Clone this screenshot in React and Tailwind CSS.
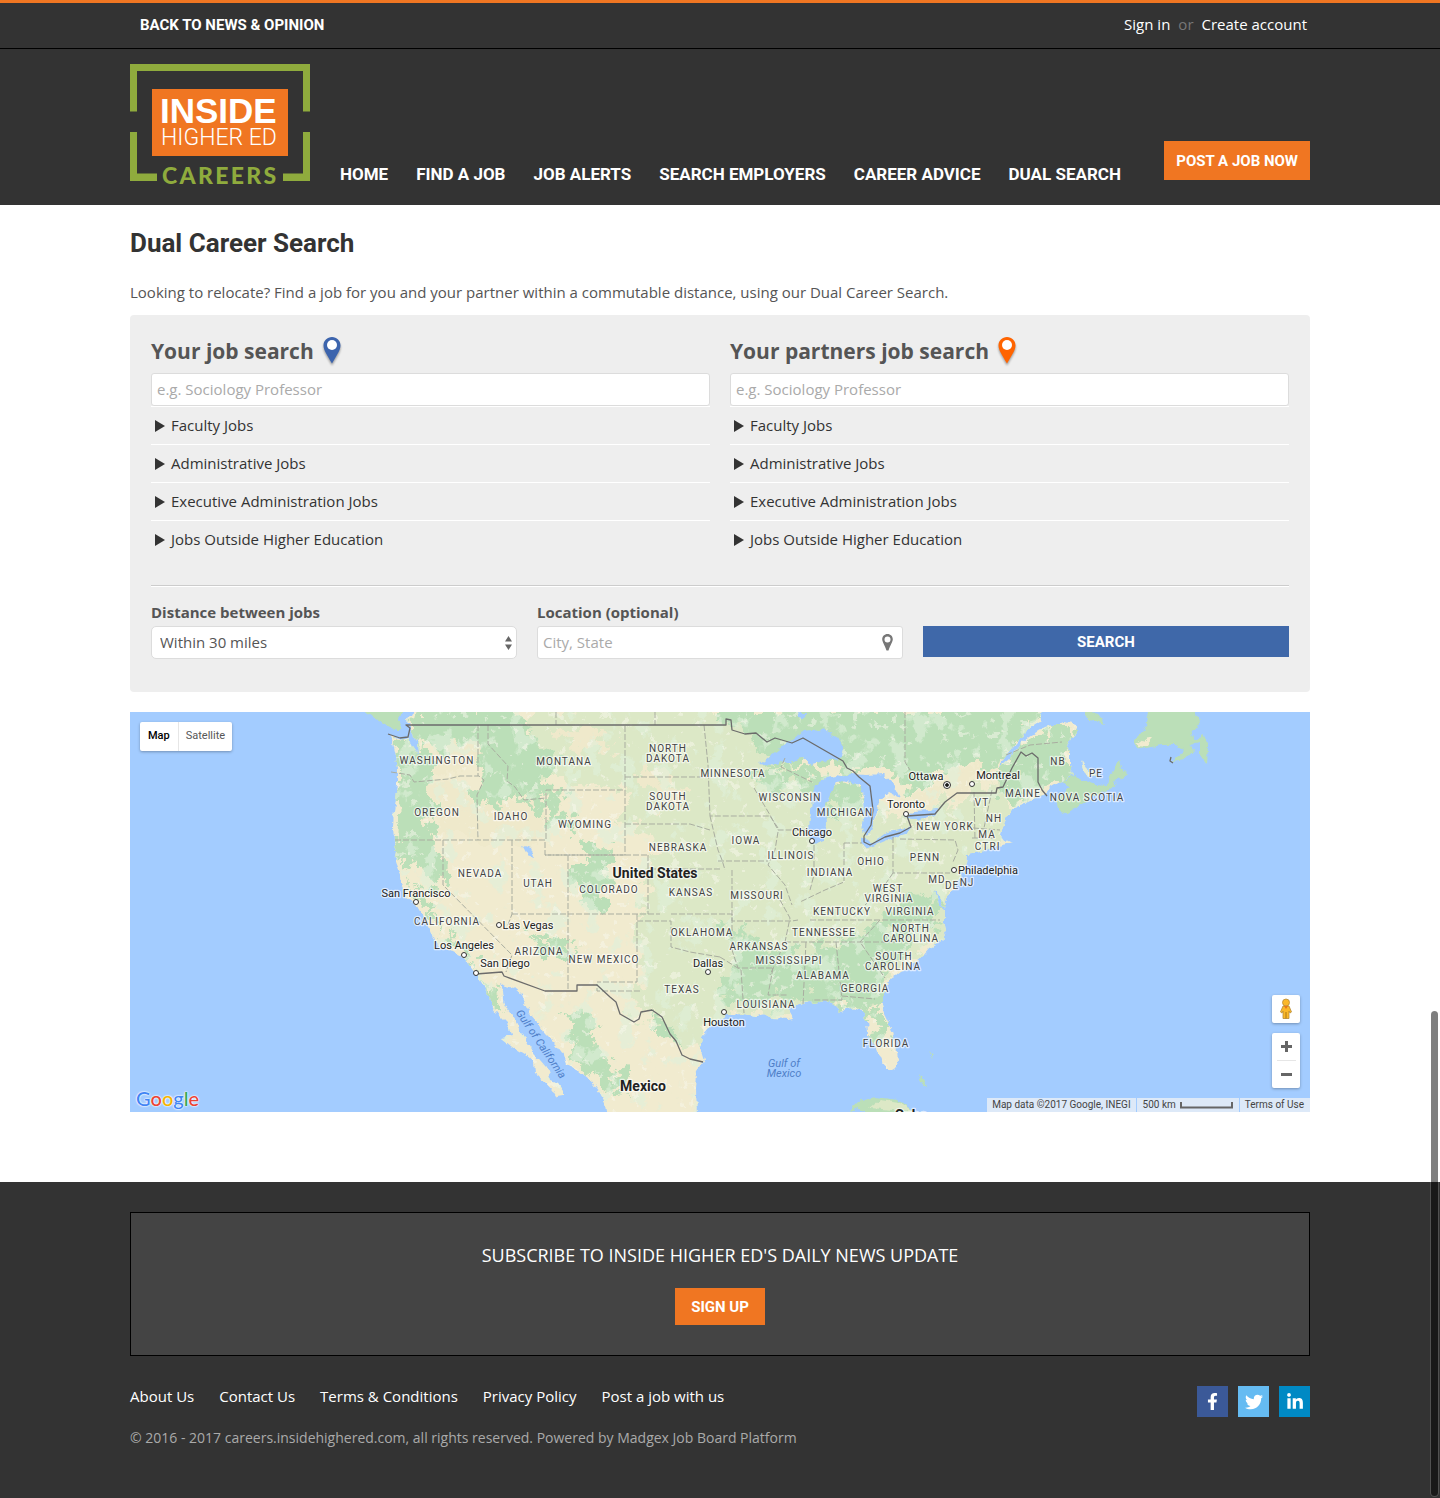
import React from "react";
import { FaFacebookF, FaTwitter, FaLinkedinIn } from "react-icons/fa";

const NAV = ["Home", "Find a job", "Job alerts", "Search employers", "Career advice", "Dual search"];
const SECTORS = ["Faculty Jobs", "Administrative Jobs", "Executive Administration Jobs", "Jobs Outside Higher Education"];
const FOOTER_LINKS = ["About Us", "Contact Us", "Terms & Conditions", "Privacy Policy", "Post a job with us"];

function Logo() {
  return (
    <svg width="180" height="121" viewBox="0 0 180 121" className="shrink-0 overflow-visible" role="img" aria-label="Inside Higher Ed Careers">
      <g fill="#8fab3d">
        <path d="M0 0H180V47.500H173V7H7V47.500H0Z" />
        <path d="M0 68H7V109.500H27V117H0Z" />
        <path d="M180 68H173V109.500H153V117H180Z" />
      </g>
      <rect x="22" y="25" width="136" height="67" fill="#f07622" />
      <text x="30" y="59" className="fill-white font-['Liberation_Sans'] text-[35px] font-bold">INSIDE</text>
      <text x="31" y="81" className="fill-white font-[Roboto] text-[23px] font-light">HIGHER ED</text>
      <text x="32" y="120" className="fill-[#8fab3d] font-[Lato] text-[23px] font-black tracking-widest">CAREERS</text>
    </svg>
  );
}

function Pin({ color }) {
  return (
    <svg width="20" height="30" viewBox="0 0 20 30" className="drop-shadow-[0_2px_1px_rgba(0,0,0,0.35)]" aria-hidden="true">
      <path d="M10 1C5.200 1 1.500 4.700 1.500 9.400C1.500 14 5.500 19.500 10 27.500C14.500 19.500 18.500 14 18.500 9.400C18.500 4.700 14.800 1 10 1Z" fill={color} />
      <circle cx="10" cy="9" r="5" fill="#fff" />
    </svg>
  );
}

function JobSearch({ id, title, color }) {
  return (
    <section className="min-w-0">
      <div className="flex h-[37px] items-start gap-2">
        <label htmlFor={id} className="text-[21px] leading-[30px] font-bold text-[#555]">{title}</label>
        <Pin color={color} />
      </div>
      <input
        id={id}
        type="text"
        placeholder="e.g. Sociology Professor"
        className="block h-[33px] w-full rounded-[3px] border border-[#dcdcdc] bg-white px-[5px] pb-[2px] text-[15px] text-[#555] placeholder:text-[#aaa]"
      />
      {SECTORS.map((s) => (
        <details key={s} className="border-t border-white">
          <summary className="flex h-[37px] cursor-pointer list-none items-center gap-[6px] pl-[4px] text-[15px] text-[#333]">
            <svg width="10" height="12" viewBox="0 0 10 12" aria-hidden="true"><path d="M0 0L10 6L0 12Z" fill="#333" /></svg>
            {s}
          </summary>
        </details>
      ))}
    </section>
  );
}

const COAST =
  "M412 712L408 720L411 729L417 741L418 753L413 746L408 737L400 739L389 734L393 742L396 755L398 770L398 785L394 810L393 828L394 840L397 850L395 862L401 877L403 888L407 898L415 903L424 918L430 928L434 940L440 947L452 951L463 957L470 965L476 973L480 981L485 989L490 997L493 1008L500 1017L510 1027L512 1036L501 1038L506 1042L515 1049L525 1055L533 1062L534 1073L545 1082L553 1091L557 1098L563 1097L563 1090L558 1083L551 1080L547 1068L540 1060L532 1050L527 1042L522 1033L517 1022L512 1014L507 1008L504 1001L503 990L501 983L506 986L514 988L521 994L524 1003L530 1014L538 1023L545 1034L555 1044L563 1055L566 1064L578 1070L590 1080L600 1093L606 1104L608 1120L697 1120L696 1090L697 1070L704 1060L700 1047L702 1037L708 1030L717 1022L727 1015L742 1014L757 1016L766 1014L773 1018L788 1019L793 1018L790 1013L789 1008L800 1005L808 1002L815 1003L824 1000L833 1004L841 1012L850 1008L860 1010L867 1020L868 1035L876 1048L881 1060L887 1068L891 1071L896 1068L898 1060L896 1045L891 1028L885 1015L883 1003L883 994L889 980L900 972L910 967L922 957L930 948L940 942L946 931L944 922L944 912L938 900L933 890L939 896L944 907L948 896L955 890L958 880L963 872L966 862L967 855L980 853L992 847L1003 845L1012 843L1006 840L1000 832L1003 825L1007 815L1015 808L1030 801L1045 794L1050 788L1060 782L1074 775L1070 765L1070 750L1065 746L1072 738L1077 733L1076 725L1065 722L1045 727L1030 736L1020 745L1008 760L998 768L1006 756L1018 742L1030 728L1040 722L1043 705L412 700Z";

const LAKES = [
  "M760 764L775 752L788 743L803 731L822 729L838 737L844 748L842 757L828 761L812 765L800 757L790 764L782 760L770 766Z",
  "M809 828L811 812L812 797L816 785L825 778L836 776L846 778L838 782L832 790L826 805L827 825L823 842L815 844L811 840Z",
  "M838 779L850 774L866 775L884 774L893 782L901 798L889 792L880 800L878 808L874 820L868 836L862 830L865 812L864 800L860 785Z",
  "M862 838L873 843L888 832L905 829L912 827L905 834L885 841L868 848L862 844Z",
  "M905 818L912 811L928 810L938 809L936 815L920 819L910 819Z",
  "M522 845L530 848L534 858L528 856Z",
  "M797 712L806 712L804 718L798 717Z",
];

const GREEN = [
  "M405 705L512 705L520 725L540 740L560 760L545 790L556 800L540 810L505 795L490 815L480 790L478 760L460 745L430 745L420 752L438 760L430 790L432 820L440 840L443 865L450 885L442 892L425 870L415 860L410 875L402 870L395 840L398 780L393 745L408 737Z",
  "M545 795L565 800L568 830L557 835L550 815Z",
  "M580 845L605 850L615 880L600 905L590 910L572 890L580 870Z",
  "M410 875L425 900L445 930L470 945L480 975L465 955L440 925L420 910Z",
  "M715 705L1045 705L1030 730L1005 760L985 770L960 765L930 790L905 790L890 770L850 770L820 760L790 765L770 765L750 735L720 725Z",
  "M760 765L805 770L830 780L808 795L790 785L765 790Z",
  "M845 778L862 790L865 808L845 812L828 820L832 795Z",
  "M1000 768L1025 742L1040 740L1070 722L1076 733L1070 750L1074 775L1045 792L1015 806L1000 800Z",
  "M720 925L745 930L765 950L790 955L830 945L870 930L895 905L930 890L944 915L920 930L900 960L880 975L885 1000L860 1010L835 1004L780 1000L740 1010L722 1000L725 975L740 955Z",
  "M860 1008L884 1010L892 1035L888 1050L875 1035Z",
  "M565 1005L590 1015L597 1045L618 1070L625 1100L600 1080L575 1065L570 1040Z",
  "M535 935L560 940L578 960L560 958L540 945Z",
  "M480 975L495 990L500 1010L490 1000Z",
  "M655 1015L672 1025L680 1050L668 1040Z",
];

const SOFT = [
  "M612 705L720 705L790 765L850 790L870 810L905 820L1000 780L1010 840L960 880L945 930L890 975L884 1000L790 1012L720 1020L702 1040L680 1052L660 1015L635 1012L640 900L660 840L625 825L625 790L550 780L525 760L530 705Z",
];

const BEIGE = [
  "M442 745L475 740L480 760L462 775L440 772Z",
  "M548 728L600 730L618 745L590 750L560 742Z",
  "M430 790L450 780L478 795L480 820L500 805L530 800L545 820L545 838L500 845L460 836L440 830Z",
  "M900 800L930 792L960 776L1005 760L1000 770L960 790L935 806L905 808Z",
  "M640 770L670 775L690 800L665 805L650 795Z",
];

const STATE_LINES =
  "M391 772L410 775L414 782L448 779L460 776L479 776L484 780L477 795L478 840M395 840H546V790H625V855H545V840M478 725V776M488 725V744L508 766L507 781L515 787L524 800L546 798M443 840V885L512 955L506 972M512 840V914L506 930M625 726V790M568 855V991M545 855H649M512 914H660M648 855V914M625 777H707M625 824H690L710 830M704 725L708 765L710 816H770L778 828M710 816L718 850L722 860L725 870M650 869H722M718 861H768M640 991H597V984M637 914V982H597M637 921H671V947L690 952L720 957M732 870V921H792L798 920M671 914H732V950L738 968H773M720 957L741 970L744 1013M773 968L768 995H788M785 942H895M806 942L803 1004M836 942L842 1000H812M842 996L875 999M780 900L790 918L785 942L770 975M810 920H940M880 920L860 942L885 978M778 832L775 850L768 865L785 885L792 905M754 788L770 815L778 830H812M814 845V875L810 890M844 843H862M844 843V882L825 890L800 902M893 837V873H950M900 839L955 840L958 850L953 862M974 792L975 840M992 790L984 828M973 828L1000 830M972 838H996M893 873L880 892L865 905M785 758L781 767L812 782M1006 755L1030 745L1062 742M905 712V762L910 770M556 712V725M655 712V725";

const NATIONAL_LINES =
  "M388 734L400 738L408 737L410 728L406 725H726V719L731 720L732 730L745 734L756 733L762 738L767 742L775 738L792 743L803 738L843 761L847 768L853 771L859 777L870 786L873 810L871 825L864 836L864 842L870 845L885 837L900 833L911 827L907 816L935 814L945 802L957 793H996L997 788L1003 787L1012 768L1021 752L1026 756L1032 753L1038 758V782L1042 790L1047 796M476 974L502 972L504 976L545 991H577V985H597L610 997L616 1002L620 1014L634 1022L639 1019L641 1012L652 1010L662 1017L670 1034L676 1041L682 1055L690 1059L703 1062M1171 757L1170 761L1173 763";

const STATES = [
  ["WASHINGTON", 437, 764], ["MONTANA", 564, 765], ["NORTH", 668, 752], ["DAKOTA", 668, 762],
  ["MINNESOTA", 733, 777], ["SOUTH", 668, 800], ["DAKOTA", 668, 810], ["WISCONSIN", 790, 801],
  ["MICHIGAN", 845, 816], ["OREGON", 437, 816], ["IDAHO", 511, 820], ["WYOMING", 585, 828],
  ["NEBRASKA", 678, 851], ["IOWA", 746, 844], ["ILLINOIS", 791, 859], ["INDIANA", 830, 876],
  ["OHIO", 871, 865], ["PENN", 925, 861], ["NEW YORK", 945, 830], ["NEVADA", 480, 877],
  ["UTAH", 538, 887], ["COLORADO", 609, 893], ["KANSAS", 691, 896], ["MISSOURI", 757, 899],
  ["WEST", 888, 892], ["VIRGINIA", 889, 902], ["KENTUCKY", 842, 915], ["VIRGINIA", 910, 915],
  ["CALIFORNIA", 447, 925], ["OKLAHOMA", 702, 936], ["TENNESSEE", 824, 936], ["NORTH", 911, 932],
  ["CAROLINA", 911, 942], ["ARKANSAS", 759, 950], ["ARIZONA", 539, 955], ["NEW MEXICO", 604, 963],
  ["MISSISSIPPI", 789, 964], ["SOUTH", 894, 960], ["CAROLINA", 893, 970], ["ALABAMA", 823, 979],
  ["TEXAS", 682, 993], ["GEORGIA", 865, 992], ["LOUISIANA", 766, 1008], ["FLORIDA", 886, 1047],
  ["NB", 1058, 765], ["PE", 1096, 777], ["MAINE", 1023, 797], ["NOVA SCOTIA", 1087, 801],
  ["VT", 982, 806], ["NH", 994, 822], ["MA", 987, 838], ["CT", 982, 850], ["RI", 995, 850],
  ["MD", 937, 883], ["DE", 952, 889], ["NJ", 967, 886],
];

/* name, label x, label baseline, dot x, dot y */
const CITIES = [
  ["San Francisco", 416, 897, 416, 902], ["Las Vegas", 528, 929, 499, 925], ["Los Angeles", 464, 949, 464, 955],
  ["San Diego", 505, 967, 476, 973], ["Dallas", 708, 967, 708, 972], ["Houston", 724, 1026, 724, 1012],
  ["Chicago", 812, 836, 812, 841], ["Toronto", 906, 808, 906, 814], ["Montreal", 998, 779, 972, 784],
  ["Philadelphia", 988, 874, 954, 870], ["Ottawa", 926, 780, 947, 785],
];

function UsMap() {
  return (
    <svg viewBox="130 712 1180 400" preserveAspectRatio="xMidYMid slice" className="block h-full w-full font-[Roboto]" role="img" aria-label="Map of the United States">
      <defs>
        <filter id="rough" x="-5%" y="-5%" width="110%" height="110%">
          <feTurbulence type="fractalNoise" baseFrequency="0.12" numOctaves="3" seed="4" result="n" />
          <feDisplacementMap in="SourceGraphic" in2="n" scale="7" xChannelSelector="R" yChannelSelector="G" />
        </filter>
        <filter id="ragged" x="-10%" y="-10%" width="120%" height="120%">
          <feTurbulence type="fractalNoise" baseFrequency="0.06" numOctaves="4" seed="9" result="n" />
          <feDisplacementMap in="SourceGraphic" in2="n" scale="44" xChannelSelector="R" yChannelSelector="G" />
        </filter>
        <filter id="greenSpecks" x="0" y="0" width="100%" height="100%">
          <feTurbulence type="fractalNoise" baseFrequency="0.055 0.045" numOctaves="4" seed="12" />
          <feColorMatrix values="0 0 0 0 0.74  0 0 0 0 0.88  0 0 0 0 0.71  14 0 0 0 -8.2" />
        </filter>
        <filter id="paleSpecks" x="0" y="0" width="100%" height="100%">
          <feTurbulence type="fractalNoise" baseFrequency="0.1" numOctaves="3" seed="31" />
          <feColorMatrix values="0 0 0 0 0.93  0 0 0 0 0.93  0 0 0 0 0.84  0 18 0 0 -12" />
        </filter>
        <clipPath id="land"><path d={COAST} /></clipPath>
      </defs>
      <rect x="130" y="712" width="1180" height="400" fill="#a3ccff" />
      <g filter="url(#rough)">
        <path d={COAST} fill="#f1ebcf" />
        <g clipPath="url(#land)">
          <g filter="url(#ragged)">
            {SOFT.map((d) => <path key={d} d={d} fill="#dce8c6" />)}
            {GREEN.map((d) => <path key={d} d={d} fill="#bbdfb8" />)}
            {BEIGE.map((d) => <path key={d} d={d} fill="#efe9cb" />)}
          </g>
          <rect x="380" y="705" width="700" height="410" filter="url(#greenSpecks)" opacity="0.6" />
          <rect x="380" y="705" width="700" height="410" filter="url(#paleSpecks)" opacity="0.5" />
        </g>
        <g fill="#bbdfb8">
          <path d="M362 708L405 708L398 718L403 728L398 732L385 724L373 717Z" />
          <path d="M1056 797L1058 808L1063 815L1072 810L1080 803L1095 795L1112 788L1118 780L1127 775L1122 770L1120 760L1115 765L1110 778L1108 785L1095 784L1085 780L1074 776L1062 782L1070 788Z" />
          <path d="M1150 708L1146 728L1134 740L1136 747L1145 748L1162 745L1175 745L1184 750L1175 758L1172 762L1184 760L1193 750L1190 745L1200 742L1200 755L1207 765L1208 745L1203 733L1198 740L1190 735L1200 722L1195 708Z" />
          <path d="M1078 708L1098 714L1106 724L1090 720Z" />
          <path d="M848 1112L858 1102L875 1097L898 1100L912 1110L925 1114L870 1114L858 1108Z" />
          <path d="M919 1073L924 1080L926 1088L920 1080Z" />
          <path d="M929 1052L932 1058L930 1062L933 1056Z" />
        </g>
        <path d="M1136 745L1147 737L1153 738L1146 746Z" fill="#f1ebcf" />
        <path d="M1081 760L1086 768L1096 775L1102 774L1092 776L1083 771Z" fill="#e6ecd2" />
        <path d="M870 1108L880 1100L900 1103L915 1112Z" fill="#dce8c6" />
        {LAKES.map((d) => <path key={d} d={d} fill="#a3ccff" />)}
      </g>
      <path d={STATE_LINES} fill="none" stroke="#a9ada0" strokeWidth="1" strokeDasharray="6 2" strokeLinejoin="round" />
      <path d={NATIONAL_LINES} fill="none" stroke="#6b6b6b" strokeWidth="1.300" strokeLinejoin="round" />
      <g textAnchor="middle" paintOrder="stroke" stroke="#fff" strokeOpacity="0.65" strokeWidth="2.500" strokeLinejoin="round">
        <g className="fill-[#444] text-[10px] tracking-widest">
          {STATES.map(([n, x, y]) => <text key={n + x + y} x={x} y={y}>{n}</text>)}
        </g>
        <g className="fill-[#222] text-[11px]">
          {CITIES.map(([n, x, y]) => <text key={n} x={x} y={y}>{n}</text>)}
        </g>
        <g className="fill-[#222] text-[14px] font-bold">
          <text x="655" y="878">United States</text>
          <text x="643" y="1091">Mexico</text>
          <text x="911" y="1120">Cuba</text>
        </g>
      </g>
      <g fill="#fff" stroke="#333" strokeWidth="1">
        {CITIES.map(([n, , , x, y]) => <circle key={n} cx={x} cy={y} r="2.500" />)}
        <circle cx="947" cy="785" r="3.500" />
        <circle cx="947" cy="785" r="1.500" fill="#111" />
      </g>
      <g textAnchor="middle" className="fill-[#4f7fc8] text-[11px] italic">
        <text x="784" y="1067">Gulf of</text>
        <text x="784" y="1077">Mexico</text>
        <text transform="translate(538 1046) rotate(56)">Gulf of California</text>
      </g>
    </svg>
  );
}

function Pegman() {
  return (
    <svg width="14" height="22" viewBox="0 0 14 22" aria-hidden="true">
      <path d="M4 8H10L12.500 14L11 15L10 13V20.500H4V13L3 15L1.500 14Z" fill="#fbb829" stroke="#b58a3a" strokeWidth="0.800" />
      <circle cx="7" cy="4.500" r="3.500" fill="#fbb829" stroke="#b58a3a" strokeWidth="0.800" />
      <path d="M5 8L7 11L9 8Z" fill="#e8751a" />
      <path d="M7 14V20.500" stroke="#a87415" />
    </svg>
  );
}

function MapPanel() {
  return (
    <div className="relative mt-5 h-[400px] overflow-hidden font-[Roboto]">
      <UsMap />
      <div className="absolute top-[10px] left-[10px] flex h-[29px] rounded-[2px] bg-white text-[11px] shadow-[0_1px_3px_rgba(0,0,0,0.3)]">
        <button type="button" className="px-2 font-medium text-black">Map</button>
        <button type="button" className="border-l border-[#e6e6e6] px-[7px] text-[#565656]">Satellite</button>
      </div>
      <a href="#google" aria-label="Google" className="absolute bottom-0 left-[6px] font-[Lato] text-[20px] leading-[28px] font-medium [text-shadow:0_0_2px_#fff,0_0_2px_#fff,0_0_1px_#fff]">
        <span className="text-[#4285f4]">G</span><span className="text-[#ea4335]">o</span><span className="text-[#f4b400]">o</span><span className="text-[#4285f4]">g</span><span className="text-[#34a853]">l</span><span className="text-[#ea4335]">e</span>
      </a>
      <div className="absolute right-[10px] bottom-[24px] flex w-7 flex-col gap-[10px]">
        <button type="button" aria-label="Street View" className="flex h-7 items-center justify-center rounded-[2px] bg-white shadow-[0_1px_3px_rgba(0,0,0,0.3)]"><Pegman /></button>
        <div className="flex flex-col items-center rounded-[2px] bg-white shadow-[0_1px_3px_rgba(0,0,0,0.3)]">
          <button type="button" aria-label="Zoom in" className="flex h-[27px] w-full items-center justify-center">
            <svg width="11" height="11" viewBox="0 0 11 11" aria-hidden="true"><path d="M4 0H7V4H11V7H7V11H4V7H0V4H4Z" fill="#666" /></svg>
          </button>
          <div className="h-px w-[19px] bg-[#e6e6e6]" />
          <button type="button" aria-label="Zoom out" className="flex h-[27px] w-full items-center justify-center">
            <svg width="11" height="3" viewBox="0 0 11 3" aria-hidden="true"><path d="M0 0H11V3H0Z" fill="#666" /></svg>
          </button>
        </div>
      </div>
      <div className="absolute right-0 bottom-0 flex h-[14px] gap-px text-[10px] leading-[14px] text-[#444]">
        <span className="bg-[#f5f5f5]/70 px-[5px]">Map data ©2017 Google, INEGI</span>
        <span className="flex items-center gap-1 bg-[#f5f5f5]/70 px-[6px]">
          500 km
          <svg width="53" height="7" viewBox="0 0 53 7" aria-hidden="true"><path d="M1 0V5.500H52V0" fill="none" stroke="#666" strokeWidth="2" /></svg>
        </span>
        <a href="#terms" className="bg-[#f5f5f5]/70 pr-[6px] pl-[5px]">Terms of Use</a>
      </div>
    </div>
  );
}

export default function App() {
  return (
    <div className="bg-white font-['Open_Sans',sans-serif] text-[#555]">
      <header className="border-t-[3px] border-[#f07622] bg-[#333] text-white">
        <div className="border-b border-black">
          <div className="mx-auto flex h-[45px] max-w-[1180px] items-center justify-between pr-[3px] pb-[2px] pl-[10px]">
            <a href="#news" className="pt-[2px] font-[Roboto] text-[15px] font-bold">BACK TO NEWS &amp; OPINION</a>
            <p className="flex gap-2 text-[15px]">
              <a href="#signin" className="font-medium">Sign in</a>
              <span className="text-[#777]">or</span>
              <a href="#create" className="font-medium">Create account</a>
            </p>
          </div>
        </div>
        <div className="mx-auto flex max-w-[1180px] items-end pt-[15px] pb-5">
          <Logo />
          <nav className="ml-[30px] flex flex-1 gap-7 font-[Roboto] text-[17px] leading-[22px] font-bold uppercase">
            {NAV.map((n) => <a key={n} href="#nav">{n}</a>)}
          </nav>
          <a href="#post" className="mb-[5px] flex h-[39px] items-center bg-[#f07622] px-3 pt-[2px] font-[Roboto] text-[15px] font-bold">POST A JOB NOW</a>
        </div>
      </header>

      <main className="mx-auto max-w-[1180px] pb-[70px]">
        <h1 className="pt-[22px] font-[Roboto] text-[26px] leading-8 font-bold text-[#333]">Dual Career Search</h1>
        <p className="mt-[22px] text-[15px] leading-[22px]">Looking to relocate? Find a job for you and your partner within a commutable distance, using our Dual Career Search.</p>
        <form className="mt-[12px] rounded-[4px] bg-[#eee] px-[21px] pt-[21px] pb-[33px]" onSubmit={(e) => e.preventDefault()}>
          <div className="grid grid-cols-2 gap-5">
            <JobSearch id="yours" title="Your job search" color="#3c64ad" />
            <JobSearch id="partners" title="Your partners job search" color="#ff6400" />
          </div>
          <hr className="mt-[27px] border-t border-b border-t-[#ccc] border-b-white" />
          <div className="mt-[14px] grid grid-cols-3 gap-5 text-[15px]">
            <div>
              <label htmlFor="distance" className="block h-[25px] leading-[22px] font-bold">Distance between jobs</label>
              <div className="relative">
                <select id="distance" className="block h-[33px] w-full appearance-none rounded-[5px] border border-[#dcdcdc] bg-white pl-2 text-[#555]">
                  <option>Within 30 miles</option>
                </select>
                <svg width="7" height="14" viewBox="0 0 7 14" className="pointer-events-none absolute top-[10px] right-[5px]" aria-hidden="true"><path d="M3.500 0L7 5.500H0ZM0 8.500H7L3.500 14Z" fill="#666" /></svg>
              </div>
            </div>
            <div>
              <label htmlFor="location" className="block h-[25px] leading-[22px] font-bold">Location (optional)</label>
              <div className="relative">
                <input id="location" type="text" placeholder="City, State" className="block h-[33px] w-full rounded-[3px] border border-[#dcdcdc] bg-white px-[5px] pb-[2px] placeholder:text-[#aaa]" />
                <svg width="11" height="17" viewBox="0 0 11 17" className="pointer-events-none absolute top-2 right-[10px]" aria-hidden="true"><path fillRule="evenodd" d="M5.500 0C2.400 0 0.200 2.300 0.200 5.300C0.200 8 2.700 11 4.500 16.500H6.500C8.300 11 10.800 8 10.800 5.300C10.800 2.300 8.600 0 5.500 0ZM5.500 2.500A3 3 0 1 1 5.500 8.500A3 3 0 1 1 5.500 2.500Z" fill="#777" /></svg>
              </div>
            </div>
            <button type="submit" className="mt-[25px] h-[31px] bg-[#3f68a9] pt-px font-[Roboto] font-bold text-white">SEARCH</button>
          </div>
        </form>
        <MapPanel />
      </main>

      <footer className="bg-[#333] pt-[30px] pb-[49px]">
        <div className="mx-auto max-w-[1180px]">
          <div className="flex flex-col items-center border border-black bg-[#444] pt-[29px] pb-[30px] text-white">
            <h2 className="text-[18px] leading-[26px] font-medium">SUBSCRIBE TO INSIDE HIGHER ED'S DAILY NEWS UPDATE</h2>
            <button type="button" className="mt-5 h-[37px] bg-[#f07622] px-4 pt-px font-[Roboto] text-[15px] font-bold">SIGN UP</button>
          </div>
          <div className="mt-[30px] flex justify-between">
            <ul className="flex gap-[25px] text-[15px] leading-5 font-medium text-white">
              {FOOTER_LINKS.map((l) => <li key={l}><a href="#footer">{l}</a></li>)}
            </ul>
            <div className="flex gap-[10px] text-white">
              <a href="#facebook" aria-label="Facebook" className="flex size-[31px] items-center justify-center bg-[#3b5998]"><FaFacebookF size={17} /></a>
              <a href="#twitter" aria-label="Twitter" className="flex size-[31px] items-center justify-center bg-[#65bbf2]"><FaTwitter size={18} /></a>
              <a href="#linkedin" aria-label="LinkedIn" className="flex size-[31px] items-center justify-center bg-[#0089c4]"><FaLinkedinIn size={18} /></a>
            </div>
          </div>
          <p className="mt-[10px] text-[14px] leading-[22px] text-[#aaa]">© 2016 - 2017 careers.insidehighered.com, all rights reserved. Powered by Madgex Job Board Platform</p>
        </div>
      </footer>
      <div aria-hidden="true" className="fixed right-[1px] bottom-[1px] h-[487px] w-[9px] rounded-full border border-white/15 bg-black/50 bg-clip-padding" />
    </div>
  );
}
